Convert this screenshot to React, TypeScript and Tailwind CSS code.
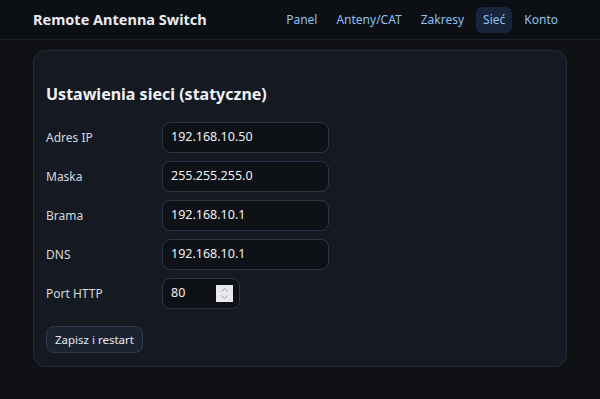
import React from "react"

const NAV = ["Panel", "Anteny/CAT", "Zakresy", "Sieć", "Konto"]

const FIELDS = [
  { label: "Adres IP", value: "192.168.10.50" },
  { label: "Maska", value: "255.255.255.0" },
  { label: "Brama", value: "192.168.10.1" },
  { label: "DNS", value: "192.168.10.1" },
]

export default function App() {
  return (
    <div
      className="min-h-[399px] bg-[#0f1115] text-[#e6e9ef]"
      style={{ fontFamily: '"Noto Sans", "Open Sans", sans-serif' }}
    >
      <header className="h-[40px] flex items-center justify-between pl-[33px] pr-[35px] bg-[#0c0f13] border-b border-[#1c212a]">
        <span className="text-[14.5px] font-bold text-[#e8ebf0]">Remote Antenna Switch</span>
        <nav className="flex items-center gap-[5px] text-[12px] text-[#8ec0f0]">
          {NAV.map((item) => (
            <span
              key={item}
              className={`px-[7px] py-[4px] rounded-[6px] ${item === "Sieć" ? "bg-[#17243a]" : ""}`}
            >
              {item}
            </span>
          ))}
        </nav>
      </header>

      <main className="px-[33px] pt-[10px] pb-[32px]">
        <div className="rounded-[12px] border border-[#232c3b] bg-[#151a22] px-[12px] pt-[31px] pb-[13px]">
          <h1 className="text-[16px] font-bold text-[#eef1f5] mb-[16px]">Ustawienia sieci (statyczne)</h1>

          <div className="flex flex-col gap-[8px]">
            {FIELDS.map((f) => (
              <div key={f.label} className="flex items-center">
                <span className="w-[116px] text-[12px] text-[#d4d8df]">{f.label}</span>
                <div className="w-[167px] h-[31px] flex items-center px-[8px] rounded-[8px] border border-[#2b3545] bg-[#0e1116] text-[12.5px] text-[#eef1f5]">
                  {f.value}
                </div>
              </div>
            ))}
            <div className="flex items-center">
              <span className="w-[116px] text-[12px] text-[#d4d8df]">Port HTTP</span>
              <div className="w-[78px] h-[31px] flex items-center justify-between pl-[8px] pr-[6px] rounded-[8px] border border-[#2b3545] bg-[#0e1116] text-[12.5px] text-[#eef1f5]">
                <span>80</span>
                <span className="w-[17px] h-[17px] bg-[#e8e8ee] flex items-center justify-center">
                  <svg width="9" height="13" viewBox="0 0 9 13" fill="none" stroke="#9a9aa2" strokeWidth="1">
                    <path d="M1.5 4.5 L4.5 1.5 L7.5 4.5" />
                    <path d="M1.5 8.5 L4.5 11.5 L7.5 8.5" />
                  </svg>
                </span>
              </div>
            </div>
          </div>

          <button className="mt-[17px] h-[27px] px-[8px] rounded-[8px] border border-[#2f3a4c] bg-[#1b2331] text-[11.5px] text-[#e6e9ef]">
            Zapisz i restart
          </button>
        </div>
      </main>
    </div>
  )
}
